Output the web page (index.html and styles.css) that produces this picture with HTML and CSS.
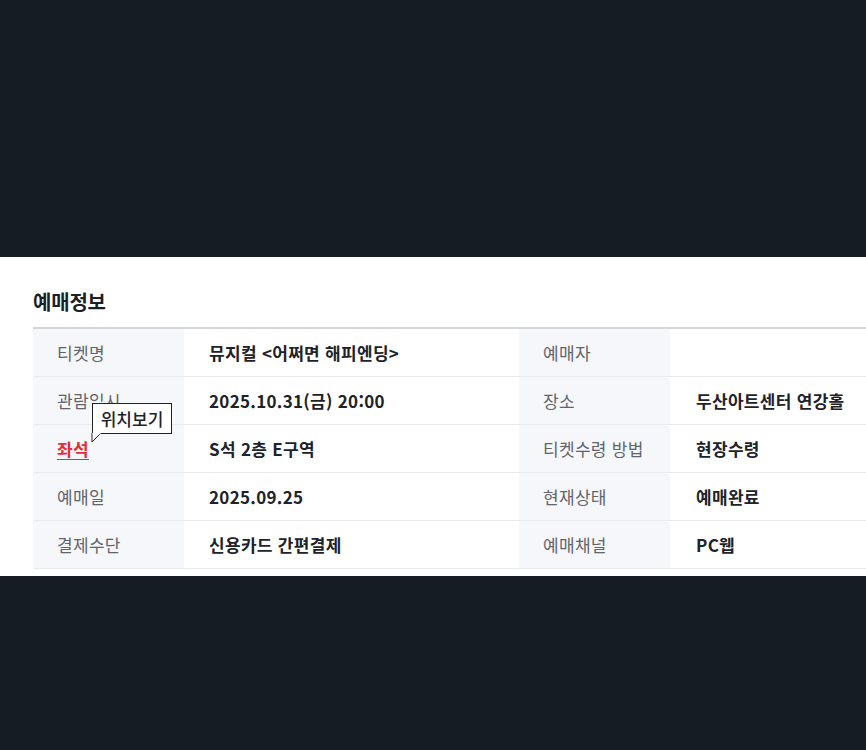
FILE: index.html
```html
<!DOCTYPE html>
<html lang="ko">
<head>
<meta charset="utf-8">
<link rel="stylesheet" href="styles.css">
</head>
<body>
<div class="top"></div>
<section class="panel">
  <h2 class="title">예매정보</h2>
  <div class="table">
    <div class="row">
      <div class="lbl">티켓명</div>
      <div class="val">뮤지컬 &lt;어쩌면 해피엔딩&gt;</div>
      <div class="lbl">예매자</div>
      <div class="val"></div>
    </div>
    <div class="row">
      <div class="lbl">관람일시</div>
      <div class="val">2025.10.31(금) 20:00</div>
      <div class="lbl">장소</div>
      <div class="val">두산아트센터 연강홀</div>
    </div>
    <div class="row">
      <div class="lbl seat"><a class="seat-link">좌석</a>
        <div class="tip">위치보기
          <svg class="tail" width="12" height="10" viewBox="0 0 12 10"><path d="M1 0 L1 9 L9 1" fill="#fff" stroke="#222" stroke-width="1"/><rect x="1.5" y="0" width="8" height="1.2" fill="#fff"/></svg>
        </div>
      </div>
      <div class="val">S석 2층 E구역</div>
      <div class="lbl">티켓수령 방법</div>
      <div class="val">현장수령</div>
    </div>
    <div class="row">
      <div class="lbl">예매일</div>
      <div class="val">2025.09.25</div>
      <div class="lbl">현재상태</div>
      <div class="val">예매완료</div>
    </div>
    <div class="row">
      <div class="lbl">결제수단</div>
      <div class="val">신용카드 간편결제</div>
      <div class="lbl">예매채널</div>
      <div class="val">PC웹</div>
    </div>
  </div>
</section>
<div class="bottom"></div>
</body>
</html>
```
FILE: styles.css
```css
html, body {
  margin: 0;
  padding: 0;
  background: #151c23;
  font-family: "Noto Sans CJK KR", "Noto Sans", sans-serif;
}
.top { height: 257px; }
.bottom { height: 174px; }
.panel {
  background: #fff;
  height: 319px;
  padding: 32px 0 0 33px;
  box-sizing: border-box;
}
.title {
  margin: 0 0 12px 0;
  font-size: 20px;
  line-height: 26px;
  font-weight: 700;
  color: #1b1f26;
  letter-spacing: -0.2px;
}
.table {
  border-top: 2px solid #d4d6da;
}
.row {
  display: grid;
  grid-template-columns: 151px 335px 151px 1fr;
  height: 48px;
  border-bottom: 1px solid #e8eaee;
  box-sizing: border-box;
}
.lbl, .val {
  display: flex;
  align-items: center;
  padding-left: 24px;
  font-size: 17px;
  letter-spacing: 0.3px;
}
.lbl {
  background: #f5f7fa;
  color: #61656b;
}
.val {
  color: #1e2229;
  font-weight: 700;
  padding-left: 25px;
}
.row .val:last-child { padding-left: 26px; }
.seat { position: relative; }
.seat-link {
  color: #ec2a36;
  font-weight: 700;
  text-decoration: underline;
  text-underline-offset: 3px;
}
.tip {
  position: absolute;
  left: 59px;
  top: -22px;
  width: 80px;
  height: 31px;
  box-sizing: border-box;
  border: 1px solid #222;
  background: #fff;
  color: #1e2229;
  font-size: 17px;
  font-weight: 500;
  display: flex;
  align-items: center;
  justify-content: center;
  letter-spacing: 0;
  z-index: 2;
}
.tail {
  position: absolute;
  left: -2px;
  top: 29px;
  display: block;
}
```
